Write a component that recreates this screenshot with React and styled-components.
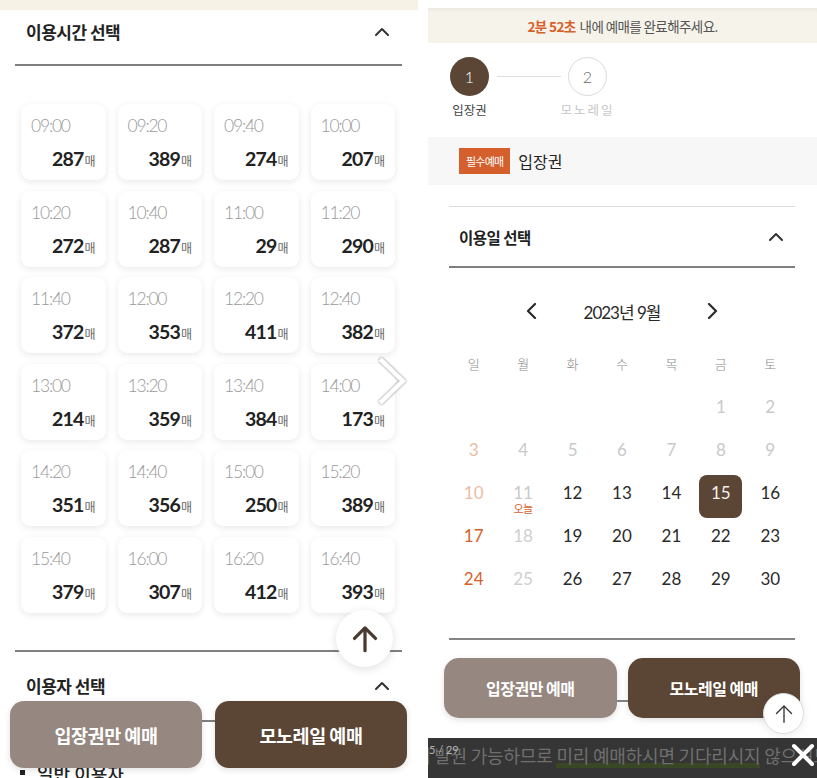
import React from 'react';
import styled, { createGlobalStyle } from 'styled-components';

const KR = `"Noto Sans CJK KR", "Noto Sans", sans-serif`;
const NUM = `Lato, "Noto Sans CJK KR", sans-serif`;
const BROWN = '#5b4636';
const TAUPE = '#968880';
const ORANGE = '#d7602b';

const Global = createGlobalStyle`
  html, body { margin: 0; padding: 0; background: #fff; }
  body { font-family: ${KR}; color: #222; }
  * { box-sizing: border-box; }
`;

const Page = styled.div`
  display: flex;
  gap: 10px;
  width: 817px;
  height: 778px;
  overflow: hidden;
  background: #fff;
`;

/* ---------- shared ---------- */
const Chevron = ({ dir = 'up', w = 14, h = 9, color = '#333', sw = 2 }) => {
  const pts = {
    up: `1,${h - 1} ${w / 2},2 ${w - 1},${h - 1}`,
    left: `${w - 2},1 2,${h / 2} ${w - 2},${h - 1}`,
    right: `2,1 ${w - 2},${h / 2} 2,${h - 1}`,
  }[dir];
  return (
    <svg width={w} height={h} viewBox={`0 0 ${w} ${h}`}>
      <polyline points={pts} fill="none" stroke={color} strokeWidth={sw} strokeLinecap="round" strokeLinejoin="round" />
    </svg>
  );
};

const ActionBar = styled.div`
  position: absolute;
  left: ${p => p.$l}px;
  right: ${p => p.$r}px;
  top: ${p => p.$t}px;
  height: ${p => p.$h}px;
  display: flex;
  gap: ${p => p.$gap}px;
`;

const ActionButton = styled.button`
  flex: 1;
  border: none;
  border-radius: ${p => p.$radius}px;
  background: ${p => (p.$primary ? BROWN : TAUPE)};
  color: #fff;
  font-family: ${KR};
  font-weight: 700;
  font-size: ${p => p.$fs}px;
  letter-spacing: -0.5px;
  box-shadow: 0 2px 6px rgba(0, 0, 0, 0.12);
  display: flex;
  align-items: center;
  justify-content: center;
  padding: 0;
`;

/* ---------- left panel ---------- */
const LeftPanel = styled.div`
  position: relative;
  width: 418px;
  height: 778px;
  overflow: hidden;
  flex: none;
`;

const TopStrip = styled.div`
  height: 10px;
  background: #f6f2e6;
`;

const SectionHead = styled.div`
  margin: ${p => p.$mt || 0}px 16px 0 15px;
  height: ${p => p.$h}px;
  display: flex;
  align-items: center;
  justify-content: space-between;
  padding: 0 13px ${p => p.$pb || 0}px 11px;
  border-top: ${p => (p.$topLine ? '2px solid #7f7f7f' : 'none')};
  border-bottom: 2px solid #7f7f7f;
`;

const SectionTitle = styled.div`
  font-size: 17px;
  font-weight: 700;
  letter-spacing: -0.5px;
  color: #222;
`;

const SlotGrid = styled.div`
  display: grid;
  grid-template-columns: repeat(4, 1fr);
  grid-auto-rows: 76px;
  column-gap: 12px;
  row-gap: 10.5px;
  padding: 38px 23px 0 21px;
`;

const SlotCard = styled.div`
  background: #fff;
  border-radius: 9px;
  box-shadow: 0 2px 7px rgba(0, 0, 0, 0.09);
  padding: 12px 10px 0 10px;
  display: flex;
  flex-direction: column;
`;

const SlotTime = styled.div`
  font-family: ${NUM};
  font-weight: 300;
  font-size: 17.5px;
  line-height: 20px;
  letter-spacing: -1.2px;
  color: #999;
`;

const SlotCount = styled.div`
  margin-top: 11px;
  display: flex;
  justify-content: flex-end;
  align-items: baseline;
  line-height: 24px;
`;

const CountNum = styled.span`
  font-family: ${NUM};
  font-weight: 700;
  font-size: 19.5px;
  letter-spacing: -0.8px;
  color: #222;
`;

const CountUnit = styled.span`
  font-family: ${KR};
  font-size: 12px;
  font-weight: 400;
  color: #666;
  margin-left: 1px;
`;

const BigArrow = styled.div`
  position: absolute;
  left: 376px;
  top: 356px;
  filter: drop-shadow(0 0 1.2px rgba(0, 0, 0, 0.55));
`;

const Fab = styled.div`
  position: absolute;
  left: ${p => p.$x}px;
  top: ${p => p.$y}px;
  width: ${p => p.$d}px;
  height: ${p => p.$d}px;
  border-radius: 50%;
  background: #fff;
  border: ${p => (p.$border ? '1px solid #dcdcdc' : 'none')};
  box-shadow: 0 2px 10px rgba(0, 0, 0, ${p => (p.$border ? 0.08 : 0.13)});
  display: flex;
  align-items: center;
  justify-content: center;
`;

const UserItem = styled.div`
  margin: 38px 0 0 20px;
  display: flex;
  align-items: center;
  gap: 12px;
  font-size: 18px;
  font-weight: 500;
  line-height: 26px;
  color: #222;
`;

const Bullet = styled.span`
  width: 5px;
  height: 5px;
  background: #222;
`;

/* ---------- right panel ---------- */
const RightPanel = styled.div`
  position: relative;
  width: 389px;
  height: 778px;
  overflow: hidden;
  flex: none;
  padding-top: 8px;
`;

const Banner = styled.div`
  height: 35px;
  background: #f6f3ea;
  box-shadow: inset 0 4px 4px -3px rgba(0, 0, 0, 0.07);
  display: flex;
  align-items: center;
  justify-content: center;
  font-size: 13.5px;
  letter-spacing: -0.6px;
  color: #555;
  gap: 4px;
`;

const Timer = styled.b`
  color: ${ORANGE};
  font-weight: 700;
`;

const Stepper = styled.div`
  height: 94px;
  padding: 14px 0 0 22px;
  display: flex;
  align-items: flex-start;
`;

const Step = styled.div`
  width: 39px;
  display: flex;
  flex-direction: column;
  align-items: center;
`;

const StepCircle = styled.div`
  width: 39px;
  height: 39px;
  border-radius: 50%;
  display: flex;
  align-items: center;
  justify-content: center;
  font-family: ${NUM};
  font-weight: 300;
  font-size: 16px;
  background: ${p => (p.$active ? BROWN : '#fff')};
  color: ${p => (p.$active ? '#fff' : '#666')};
  border: ${p => (p.$active ? 'none' : '1.5px solid #dadada')};
`;

const StepLabel = styled.div`
  margin-top: 5px;
  font-size: 12.5px;
  line-height: 18px;
  white-space: nowrap;
  color: ${p => (p.$active ? '#444' : '#c6c6c6')};
  letter-spacing: ${p => (p.$active ? '0' : '2px')};
`;

const Connector = styled.div`
  flex: none;
  width: 64px;
  height: 1px;
  background: #dedede;
  margin: 19px 7px 0 8px;
`;

const RequiredBar = styled.div`
  height: 48px;
  background: #f7f7f7;
  display: flex;
  align-items: center;
  gap: 8px;
  padding-left: 31px;
`;

const Badge = styled.span`
  height: 26px;
  padding: 0 7px;
  background: #d5602d;
  color: #fff;
  font-size: 11px;
  letter-spacing: -0.8px;
  display: flex;
  align-items: center;
`;

const RequiredTitle = styled.span`
  font-size: 16px;
  color: #222;
`;

const Content = styled.div`
  padding: 0 22px 0 21px;
`;

const DateHead = styled.div`
  margin-top: 21px;
  height: 62px;
  border-top: 1px solid #dcdcdc;
  border-bottom: 2px solid #7f7f7f;
  display: flex;
  align-items: center;
  justify-content: space-between;
  padding: 0 12px 0 10px;
`;

const DateTitle = styled.div`
  font-size: 15.5px;
  font-weight: 700;
  letter-spacing: -0.5px;
`;

const MonthNav = styled.div`
  margin-top: 22px;
  height: 42px;
  display: flex;
  align-items: center;
  justify-content: center;
  gap: 47px;
`;

const MonthTitle = styled.div`
  font-family: ${NUM};
  font-size: 17px;
  letter-spacing: -1px;
  color: #2a2a2a;
`;

const WeekRow = styled.div`
  margin-top: 11px;
  height: 40px;
  display: grid;
  grid-template-columns: repeat(7, 1fr);
  align-items: center;
  justify-items: center;
  font-size: 13px;
  font-weight: 300;
  color: #8a8a8a;
`;

const DayGrid = styled.div`
  margin-top: 6px;
  display: grid;
  grid-template-columns: repeat(7, 1fr);
  grid-auto-rows: 43px;
  justify-items: center;
`;

const dayColor = {
  past: '#c9c9c9',
  pastSun: '#ecbda6',
  sun: ORANGE,
  off: '#cfcfcf',
  normal: '#2a2a2a',
  selected: '#f2efec',
};

const DayCell = styled.div`
  width: 43px;
  height: 43px;
  padding-top: 8px;
  display: flex;
  flex-direction: column;
  align-items: center;
  border-radius: 8px;
  background: ${p => (p.$kind === 'selected' ? BROWN : 'transparent')};
  color: ${p => dayColor[p.$kind]};
  font-family: ${NUM};
  font-size: 17px;
  line-height: 20px;
`;

const Today = styled.span`
  font-family: ${KR};
  font-size: 11px;
  line-height: 11px;
  color: ${ORANGE};
  letter-spacing: -0.5px;
`;

const Rule = styled.div`
  margin-top: ${p => p.$mt}px;
  height: 2px;
  background: #858585;
`;

const CaptionBar = styled.div`
  position: absolute;
  left: 0;
  right: 0;
  top: 738px;
  bottom: 0;
  background: #353535;
  overflow: hidden;
  display: flex;
  align-items: center;
  padding-bottom: 6px;
`;

const CaptionText = styled.div`
  margin-left: -14px;
  white-space: nowrap;
  font-size: 18px;
  color: #6f6f6f;
  letter-spacing: -0.2px;
`;

const Mark = styled.span`
  background: linear-gradient(transparent 80%, #3a4724 80%);
`;

const Counter = styled.span`
  position: absolute;
  left: 1px;
  top: 5px;
  font-family: ${NUM};
  font-size: 11px;
  color: #b5b5b5;
`;

const CloseIcon = styled.div`
  position: absolute;
  left: 363px;
  top: 5px;
  display: flex;
`;

/* ---------- data ---------- */
const slots = [
  ['09:00', 287], ['09:20', 389], ['09:40', 274], ['10:00', 207],
  ['10:20', 272], ['10:40', 287], ['11:00', 29], ['11:20', 290],
  ['11:40', 372], ['12:00', 353], ['12:20', 411], ['12:40', 382],
  ['13:00', 214], ['13:20', 359], ['13:40', 384], ['14:00', 173],
  ['14:20', 351], ['14:40', 356], ['15:00', 250], ['15:20', 389],
  ['15:40', 379], ['16:00', 307], ['16:20', 412], ['16:40', 393],
];

const weekdays = ['일', '월', '화', '수', '목', '금', '토'];

const dayKind = d => {
  if (d === 15) return 'selected';
  if (d <= 11) return d % 7 === 3 ? 'pastSun' : 'past';
  if (d === 17 || d === 24) return 'sun';
  if (d === 18 || d === 25) return 'off';
  return 'normal';
};

const UpArrow = ({ size, color, sw }) => (
  <svg width={size} height={size} viewBox="0 0 24 24">
    <line x1="12" y1="22" x2="12" y2="3" stroke={color} strokeWidth={sw} strokeLinecap="round" />
    <polyline points="3,11.5 12,2.5 21,11.5" fill="none" stroke={color} strokeWidth={sw} strokeLinecap="round" strokeLinejoin="round" />
  </svg>
);

export default function App() {
  const cells = [];
  for (let i = 0; i < 5; i++) cells.push(<div key={`b${i}`} />);
  for (let d = 1; d <= 30; d++) {
    const kind = dayKind(d);
    cells.push(
      <DayCell key={d} $kind={kind}>
        {d}
        {d === 11 && <Today>오늘</Today>}
      </DayCell>
    );
  }

  return (
    <>
      <Global />
      <Page>
        <LeftPanel>
          <TopStrip />
          <SectionHead $h={56} $pb={12}>
            <SectionTitle>이용시간 선택</SectionTitle>
            <Chevron dir="up" />
          </SectionHead>
          <SlotGrid>
            {slots.map(([t, c]) => (
              <SlotCard key={t}>
                <SlotTime>{t}</SlotTime>
                <SlotCount>
                  <CountNum>{c}</CountNum>
                  <CountUnit>매</CountUnit>
                </SlotCount>
              </SlotCard>
            ))}
          </SlotGrid>
          <SectionHead $h={72} $mt={37} $topLine>
            <SectionTitle>이용자 선택</SectionTitle>
            <Chevron dir="up" />
          </SectionHead>
          <UserItem>
            <Bullet />
            일반 이용자
          </UserItem>

          <BigArrow>
            <svg width="32" height="50" viewBox="0 0 32 50">
              <polyline points="4,3 27,25 4,47" fill="none" stroke="#fff" strokeWidth="4.5" strokeLinejoin="miter" />
            </svg>
          </BigArrow>
          <Fab $x={336} $y={610} $d={57}>
            <UpArrow size={28} color="#4a3a2e" sw={2.8} />
          </Fab>
          <ActionBar $l={10} $r={11} $t={701} $h={67} $gap={13}>
            <ActionButton $radius={14} $fs={18.5}>입장권만 예매</ActionButton>
            <ActionButton $radius={14} $fs={18.5} $primary>모노레일 예매</ActionButton>
          </ActionBar>
        </LeftPanel>

        <RightPanel>
          <Banner>
            <Timer>2분 52초</Timer>
            <span>내에 예매를 완료해주세요.</span>
          </Banner>
          <Stepper>
            <Step>
              <StepCircle $active>1</StepCircle>
              <StepLabel $active>입장권</StepLabel>
            </Step>
            <Connector />
            <Step>
              <StepCircle>2</StepCircle>
              <StepLabel>모노레일</StepLabel>
            </Step>
          </Stepper>
          <RequiredBar>
            <Badge>필수예매</Badge>
            <RequiredTitle>입장권</RequiredTitle>
          </RequiredBar>
          <Content>
            <DateHead>
              <DateTitle>이용일 선택</DateTitle>
              <Chevron dir="up" />
            </DateHead>
            <MonthNav>
              <Chevron dir="left" w={11} h={16} color="#2a2a2a" sw={2.2} />
              <MonthTitle>2023년 9월</MonthTitle>
              <Chevron dir="right" w={11} h={16} color="#2a2a2a" sw={2.2} />
            </MonthNav>
            <WeekRow>
              {weekdays.map(w => (
                <span key={w}>{w}</span>
              ))}
            </WeekRow>
            <DayGrid>{cells}</DayGrid>
            <Rule $mt={34} />
            <Rule $mt={60} />
          </Content>

          <ActionBar $l={16} $r={17} $t={658} $h={60} $gap={11}>
            <ActionButton $radius={15} $fs={16}>입장권만 예매</ActionButton>
            <ActionButton $radius={15} $fs={16} $primary>모노레일 예매</ActionButton>
          </ActionBar>
          <Fab $x={335} $y={693} $d={41} $border>
            <UpArrow size={20} color="#333" sw={1.6} />
          </Fab>
          <CaptionBar>
            <CaptionText>
              에 발권 가능하므로 <Mark>미리 예매하시면 기다리시지</Mark> 않으셔도 됩니다
            </CaptionText>
            <Counter>5 / 29</Counter>
            <CloseIcon>
              <svg width="24" height="24" viewBox="0 0 24 24">
                <path d="M3 3 L21 21 M21 3 L3 21" stroke="#fff" strokeWidth="4" strokeLinecap="round" />
              </svg>
            </CloseIcon>
          </CaptionBar>
        </RightPanel>
      </Page>
    </>
  );
}
